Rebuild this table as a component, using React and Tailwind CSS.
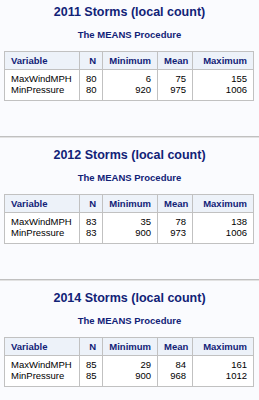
import React from 'react';

const reports = [
  {
    title: '2011 Storms (local count)',
    n: '80',
    min: ['6', '920'],
    mean: ['75', '975'],
    max: ['155', '1006'],
  },
  {
    title: '2012 Storms (local count)',
    n: '83',
    min: ['35', '900'],
    mean: ['78', '973'],
    max: ['138', '1006'],
  },
  {
    title: '2014 Storms (local count)',
    n: '85',
    min: ['29', '900'],
    mean: ['84', '968'],
    max: ['161', '1012'],
  },
];

const Stack = ({ values }) => (
  <>
    {values.map((v, i) => (
      <div key={i}>{v}</div>
    ))}
  </>
);

const MeansTable = ({ r }) => {
  const th = 'h-[18px] border border-[#c1c1c1] px-[6px] py-0 text-right font-bold text-[#112277] leading-[11px]';
  const td = 'border border-[#c1c1c1] px-[6px] pt-[2.5px] pb-[4px] text-right align-top leading-[11.5px]';
  return (
    <table className="ml-[4px] w-[249px] table-fixed border-collapse border border-[#c1c1c1] bg-white text-[9.5px]">
      <colgroup>
        <col className="w-[75px]" />
        <col className="w-[23px]" />
        <col className="w-[55px]" />
        <col className="w-[35px]" />
        <col className="w-[61px]" />
      </colgroup>
      <thead>
        <tr className="bg-[#edf2f9]">
          <th className={th + ' !text-left'}>Variable</th>
          <th className={th}>N</th>
          <th className={th}>Minimum</th>
          <th className={th}>Mean</th>
          <th className={th}>Maximum</th>
        </tr>
      </thead>
      <tbody className="text-black">
        <tr>
          <td className={td + ' !text-left'}>
            <Stack values={['MaxWindMPH', 'MinPressure']} />
          </td>
          <td className={td}>
            <Stack values={[r.n, r.n]} />
          </td>
          <td className={td}>
            <Stack values={r.min} />
          </td>
          <td className={td}>
            <Stack values={r.mean} />
          </td>
          <td className={td}>
            <Stack values={r.max} />
          </td>
        </tr>
      </tbody>
    </table>
  );
};

export default function App() {
  return (
    <div className="h-[400px] w-[259px] overflow-hidden bg-[#fafbfe] font-['Liberation_Sans',Arial,sans-serif]">
      {reports.map((r, i) => (
        <div key={r.title}>
          {i > 0 && <div className="h-[2px] border-t border-b border-t-[#c0c0c0] border-b-[#e2e2e2]" />}
          <div className={i === 0 ? 'pt-[4px]' : 'pt-[9px]'}>
            <div className="text-center text-[12.5px] font-bold leading-[16px] text-[#112277]">{r.title}</div>
            <div className="mt-[8.5px] text-center text-[9.5px] font-bold leading-[12px] text-[#112277]">
              The MEANS Procedure
            </div>
            <div className="mt-[10.5px]">
              <MeansTable r={r} />
            </div>
            {i < reports.length - 1 && <div className="h-[35.5px]" />}
          </div>
        </div>
      ))}
    </div>
  );
}
